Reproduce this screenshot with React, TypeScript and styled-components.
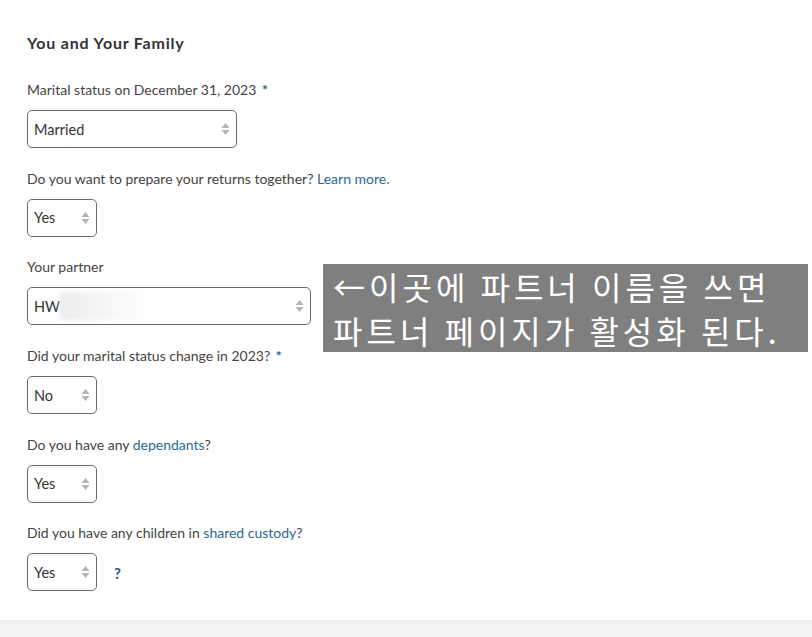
import styled, { createGlobalStyle } from "styled-components";

const GlobalStyle = createGlobalStyle`
    html, body {
        margin: 0;
        padding: 0;
        background: #ffffff;
    }
    body {
        font-family: Lato, "Liberation Sans", "Noto Sans CJK KR", sans-serif;
        color: #3a3a3a;
    }
`

interface IQuestion {
    label: React.ReactNode,
    value: string,
    width: number,
    extra?: React.ReactNode,
    blurred?: boolean,
}

const Arrows = () => (
    <svg width="9" height="14" viewBox="0 0 9 14">
        <path d="M4.5 1 L8.5 6 L0.5 6 Z" fill="#b5b5b5" />
        <path d="M4.5 13 L8.5 8 L0.5 8 Z" fill="#b5b5b5" />
    </svg>
)

const getQuestions = (): IQuestion[] => [
    {
        label: <>Marital status on December 31, 2023 <Star>*</Star></>,
        value: "Married",
        width: 210,
    },
    {
        label: <>Do you want to prepare your returns together? <Link>Learn more.</Link></>,
        value: "Yes",
        width: 70,
    },
    {
        label: <>Your partner</>,
        value: "HW",
        width: 284,
        blurred: true,
    },
    {
        label: <>Did your marital status change in 2023? <Star>*</Star></>,
        value: "No",
        width: 70,
    },
    {
        label: <>Do you have any <Link>dependants</Link>?</>,
        value: "Yes",
        width: 70,
    },
    {
        label: <>Did you have any children in <Link>shared custody</Link>?</>,
        value: "Yes",
        width: 70,
        extra: <Help>?</Help>,
    },
]

export default function App() {
    const questions = getQuestions();
    return (
        <Page>
            <GlobalStyle />
            <Form>
                <Heading>You and Your Family</Heading>
                {questions.map((q, i) => (
                    <Field key={i}>
                        <Label>{q.label}</Label>
                        <Row>
                            <Select $width={q.width}>
                                <Value>
                                    {q.value}
                                    {q.blurred && <Blur />}
                                </Value>
                                <Arrows />
                            </Select>
                            {q.extra}
                        </Row>
                    </Field>
                ))}
                <Note>
                    ←이곳에 파트너 이름을 쓰면<br />
                    파트너 페이지가 활성화 된다.
                </Note>
            </Form>
            <Footer />
        </Page>
    )
}

const Page = styled.div`
    width: 812px;
    height: 637px;
    overflow: hidden;
    display: flex;
    flex-direction: column;
`

const Form = styled.div`
    position: relative;
    height: 620px;
    flex-shrink: 0;
    padding: 33px 0 0 27px;
    box-sizing: border-box;
`

const Heading = styled.h2`
    margin: 0 0 27px;
    font-size: 16px;
    line-height: 20px;
    font-weight: 700;
    letter-spacing: 0.8px;
    color: #333333;
`

const Field = styled.div`
    margin-bottom: 20.7px;
`

const Label = styled.div`
    font-size: 14px;
    line-height: 20px;
    color: #444444;
    margin-bottom: 10px;
`

const Star = styled.span`
    color: #1d5c87;
    font-weight: 700;
    margin-left: 2px;
`

const Link = styled.span`
    color: #2c6a8f;
`

const Row = styled.div`
    display: flex;
    align-items: center;
    gap: 17px;
`

const Select = styled.div<{ $width: number }>`
    width: ${p => p.$width}px;
    height: 38px;
    box-sizing: border-box;
    border: 1px solid #6b6b6b;
    border-radius: 5px;
    display: flex;
    align-items: center;
    justify-content: space-between;
    padding: 0 6px 0 6px;
`

const Value = styled.span`
    display: flex;
    align-items: center;
    font-size: 14.5px;
    color: #333333;
`

const Blur = styled.span`
    display: inline-block;
    width: 92px;
    height: 28px;
    background: linear-gradient(90deg, #ececec 0%, #f6f6f6 50%, #fdfdfd 85%, #ffffff 100%);
    filter: blur(2px);
`

const Help = styled.span`
    font-size: 15px;
    font-weight: 700;
    color: #1d5c87;
    margin-top: 2px;
`

const Note = styled.div`
    position: absolute;
    left: 323px;
    top: 264px;
    width: 485px;
    height: 88px;
    box-sizing: border-box;
    padding: 0 0 0 10px;
    background: #7f7f7f;
    color: #ffffff;
    font-family: "Noto Sans CJK KR", sans-serif;
    font-size: 32px;
    line-height: 44px;
    letter-spacing: 4px;
    white-space: nowrap;
    overflow: hidden;
`

const Footer = styled.div`
    flex: 1;
    background: linear-gradient(180deg, #eeede9 0px, #f4f3f1 4px, #f4f3f1 100%);
`
